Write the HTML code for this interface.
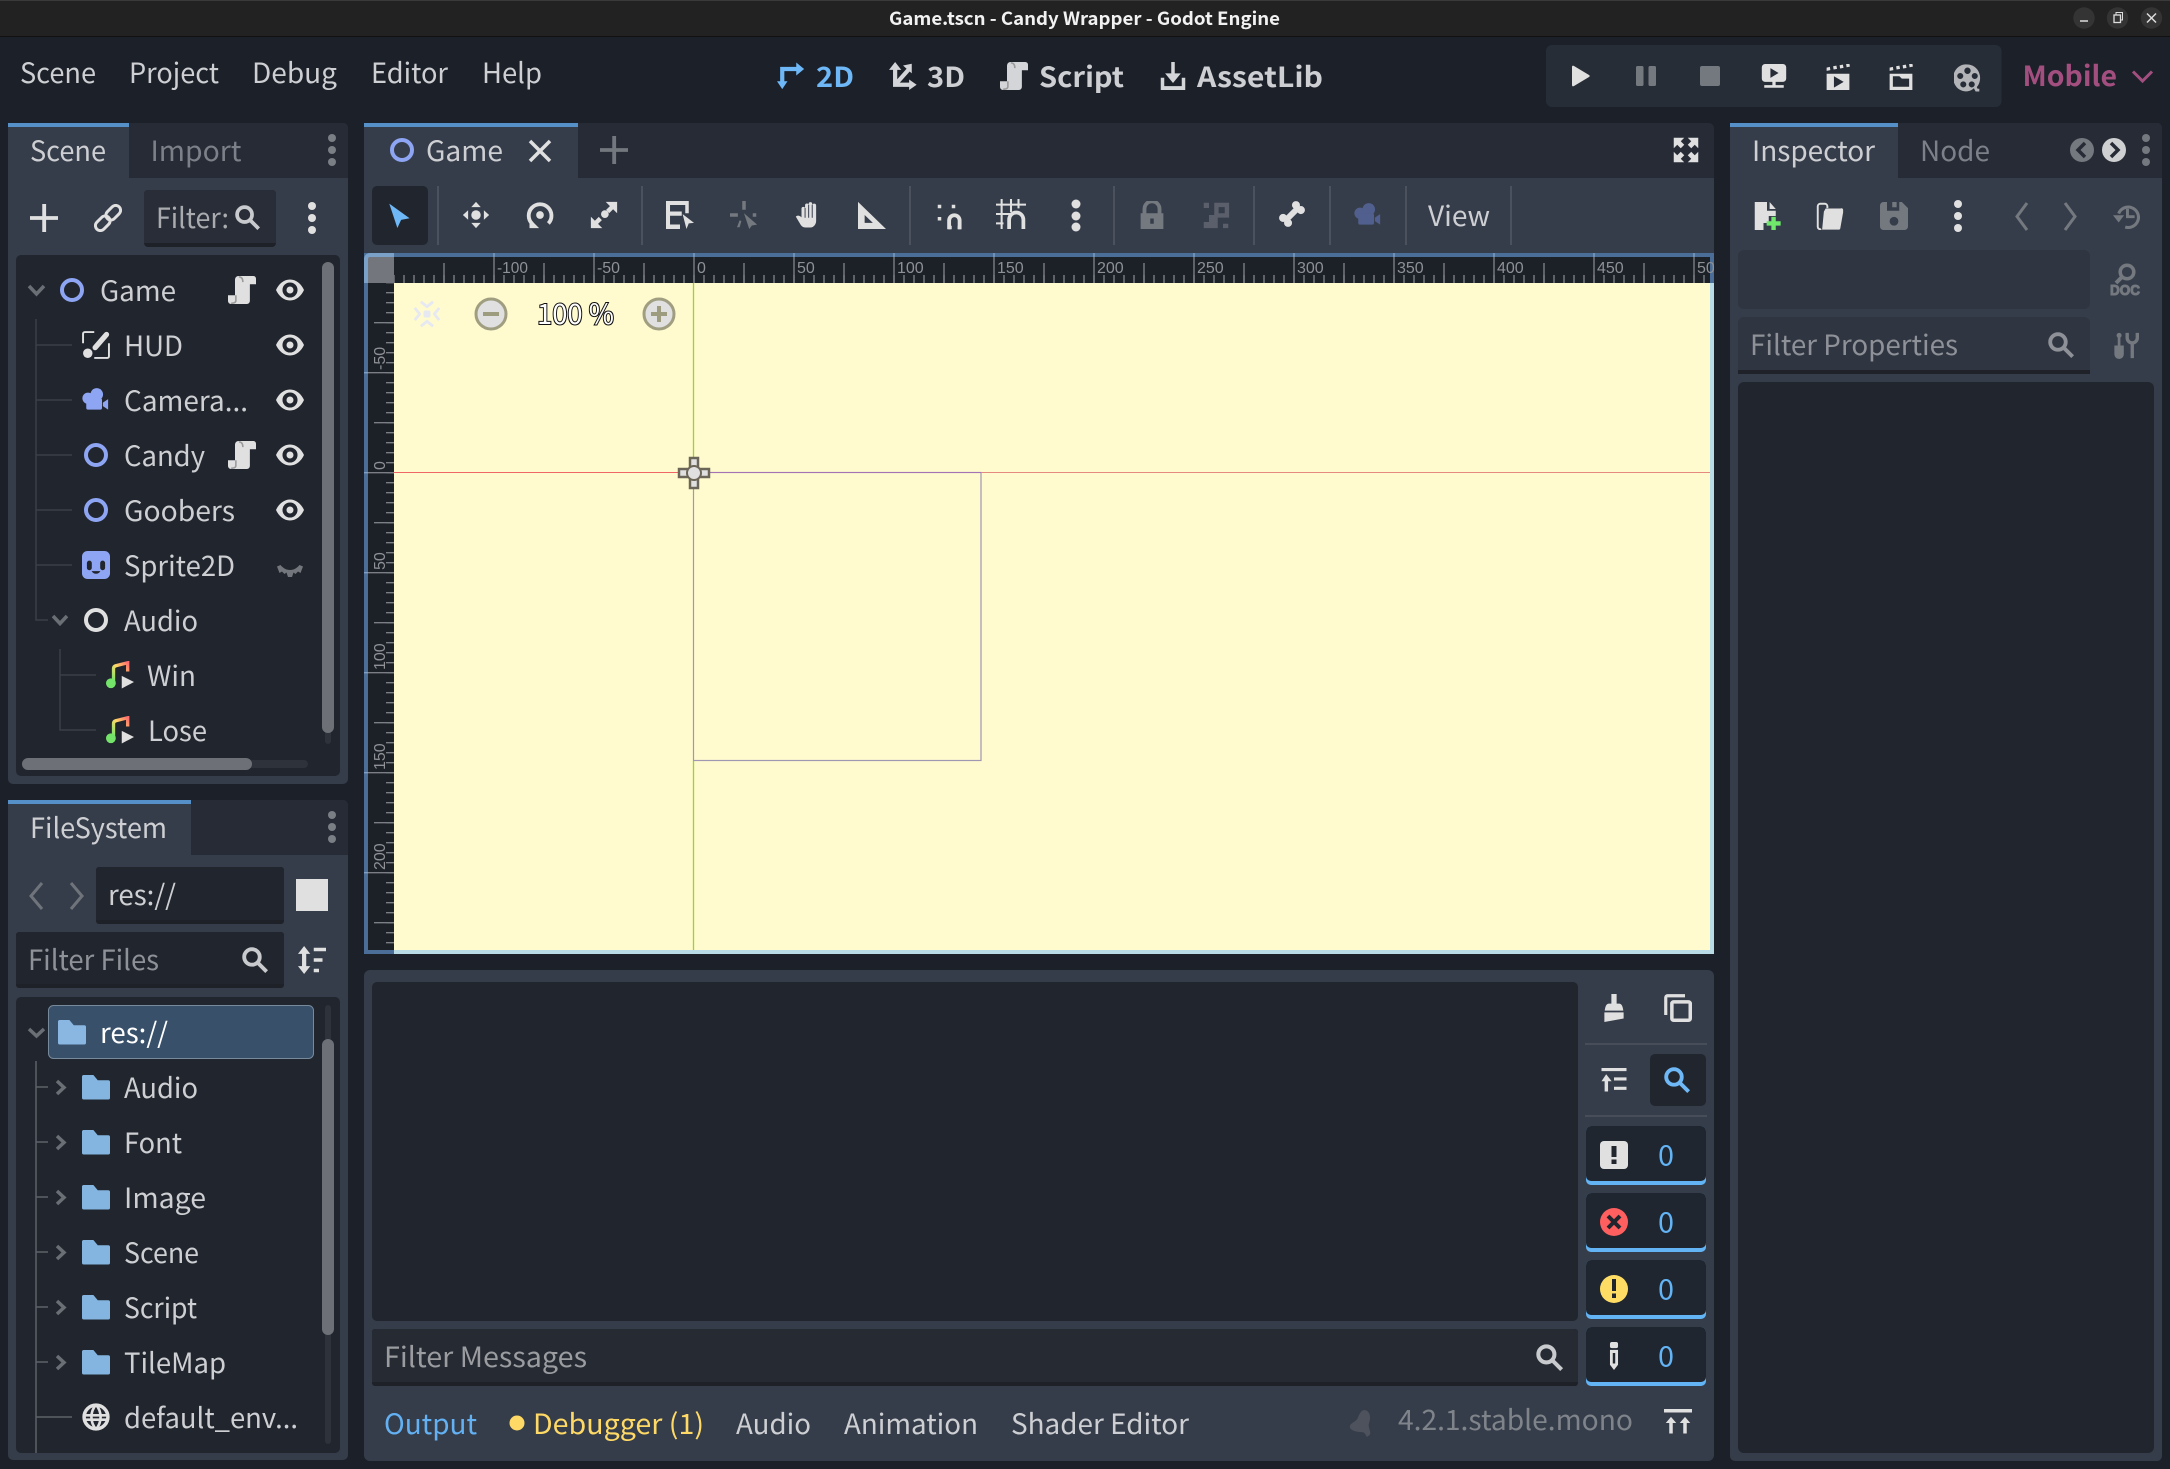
<!DOCTYPE html>
<html><head><meta charset="utf-8"><title>Game.tscn - Candy Wrapper - Godot Engine</title>
<style>
html,body{margin:0;padding:0;background:#1c2028;width:2170px;height:1469px;overflow:hidden}
svg{display:block}
text{font-family:"Noto Sans CJK JP","Liberation Sans",sans-serif;font-size:28px;fill:#cdcfd3}
.dim{fill:#7c8088}.ph{fill:#8e9197}.b{font-weight:700}.r{font-size:16px;fill:#8e9196;font-family:"Liberation Sans",sans-serif}
</style></head><body>
<svg xmlns="http://www.w3.org/2000/svg" width="2170" height="1469" viewBox="0 0 2170 1469" color="#e0e0e0">
<defs>
<linearGradient id="mg" x1="1" y1="0" x2="0" y2="1"><stop offset="0" stop-color="#ff6f6f"/><stop offset=".5" stop-color="#ffd966"/><stop offset="1" stop-color="#74e36a"/></linearGradient>
<clipPath id="rc"><rect x="394" y="253" width="1320" height="30"/></clipPath>
<symbol id="script" viewBox="0 0 16 16"><path fill="currentColor" d="M6 0h8.500A1.500 1.500 0 0 1 16 1.500V4.700h-3.500V14.300A1.700 1.700 0 0 1 10.800 16H1.700A1.700 1.700 0 0 1 0 14.300V11h4V2a2 2 0 0 1 2-2z"/><path fill="none" stroke="#9a9a9a" stroke-width=".9" d="M6.200.5c1.800 0 2.300 1.400 2.300 3M4.500 11v3c0 1.200-1.200 1.700-2.700 1.500"/></symbol>
<symbol id="eye" viewBox="0 0 16 16"><path fill="currentColor" fill-rule="evenodd" d="M8 2C4.500 2 1.500 4.600 0 8c1.500 3.400 4.500 6 8 6s6.500-2.600 8-6c-1.500-3.400-4.500-6-8-6zm0 1.700a4.300 4.300 0 1 1 0 8.600 4.300 4.300 0 0 1 0-8.600zM8 6a2 2 0 1 0 0 4 2 2 0 0 0 0-4z"/></symbol>
<symbol id="hud" viewBox="0 0 16 16"><path fill="none" stroke="currentColor" stroke-width="1.100" d="M7 .6H1.600a1 1 0 0 0-1 1V7M15.400 7v7.400a1 1 0 0 1-1 1H7"/><path fill="none" stroke="currentColor" stroke-width="3" stroke-linecap="round" d="M14 2L7.500 9.500"/><circle cx="3.300" cy="12.700" r="2.700" fill="currentColor"/></symbol>
<symbol id="cam" viewBox="0 0 16 16"><circle cx="4" cy="7" r="3.200" fill="currentColor"/><circle cx="9" cy="4.800" r="3.600" fill="currentColor"/><rect x="3" y="7" width="9" height="6.500" rx="1" fill="currentColor"/><path fill="currentColor" d="M12.500 9.500L15.500 7.500V13.500L12.500 11.500z"/></symbol>
<symbol id="sprite" viewBox="0 0 16 16"><rect x="0" y="0" width="16" height="16" rx="3.200" fill="#8da5f3"/><rect x="2.800" y="5.500" width="2.800" height="5.500" rx="1.400" fill="#21252d"/><rect x="10.400" y="5.500" width="2.800" height="5.500" rx="1.400" fill="#21252d"/><path d="M5.500 11.500c1 2 4 2 5 0z" fill="#21252d"/></symbol>
<symbol id="music" viewBox="0 0 16 16"><path fill="none" stroke="url(#mg)" stroke-width="1.900" d="M4.300 12V4.300q0-1.200 1.300-1.600L12.400 1v5"/><circle cx="2.800" cy="12.700" r="2.800" fill="#74e36a"/><path fill="#e0e0e0" d="M9 8.500l7 3.500-7 3.700z"/></symbol>
<symbol id="folder" viewBox="0 0 16 14"><path fill="currentColor" d="M1 0h5.500l2.500 3h6a1 1 0 0 1 1 1v9a1 1 0 0 1-1 1H1a1 1 0 0 1-1-1V1a1 1 0 0 1 1-1z"/></symbol>
<symbol id="search" viewBox="0 0 16 16"><circle cx="6.500" cy="6.500" r="4.600" fill="none" stroke="currentColor" stroke-width="2.300"/><path stroke="currentColor" stroke-width="2.300" d="M10 10l5.200 5.200"/></symbol>
<symbol id="globe" viewBox="0 0 16 16"><circle cx="8" cy="8" r="6.800" fill="none" stroke="currentColor" stroke-width="2"/><path fill="none" stroke="currentColor" stroke-width="1.500" d="M1 7h14M1 9.500h14M8 1c-3.500 4-3.500 10 0 14M8 1c3.500 4 3.500 10 0 14"/></symbol>
<symbol id="add" viewBox="0 0 16 16"><path fill="currentColor" d="M7 0h2.200v6.900H16v2.200H9.200V16H7V9.100H0V6.900h7z"/></symbol>
<symbol id="link" viewBox="0 0 16 16"><g transform="rotate(45 8 8)" fill="none" stroke="currentColor" stroke-width="1.700"><rect x="5.200" y="-1" width="5.600" height="9.500" rx="2.800"/><rect x="5.200" y="7.500" width="5.600" height="9.500" rx="2.800"/></g></symbol>
<symbol id="arrow" viewBox="0 0 16 16"><path fill="currentColor" d="M2 1l12.500 9-5.200 1L7 16z"/></symbol>
<symbol id="move" viewBox="0 0 16 16"><path fill="currentColor" d="M8 .5L10.700 3.500H5.300zM8 15.500L5.300 12.500h5.400zM.5 8l3-2.700v5.400zM15.500 8l-3 2.700V5.300z"/><circle cx="8" cy="8" r="2.700" fill="currentColor"/></symbol>
<symbol id="rotate" viewBox="0 0 16 16"><path fill="none" stroke="currentColor" stroke-width="2.200" d="M3.500 13A6.500 6.500 0 1 1 12.800 12.800"/><circle cx="8" cy="8" r="2.200" fill="currentColor"/><path fill="currentColor" d="M2 10l5.500 5.500H2z"/></symbol>
<symbol id="scale" viewBox="0 0 16 16"><path fill="currentColor" d="M9 .5h6.500V7l-2.300-2.300-2.200 2.200-1.800-1.800 2.200-2.200zM7 15.500H.5V9l2.300 2.300 2.200-2.200 1.800 1.800-2.200 2.200z"/><circle cx="8.500" cy="7.500" r="2.200" fill="currentColor"/></symbol>
<symbol id="list" viewBox="0 0 16 16"><path fill="currentColor" d="M0 0h13v7h-2V2.300H2.300V6H9v2.400H2.300v5H8V16H0z"/><path fill="currentColor" d="M9.500 7.500l6.500 5-3 .3-1.300 3.200z"/></symbol>
<symbol id="lsel" viewBox="0 0 16 16"><path fill="currentColor" d="M7 0h2v5H7zM0 7h4.500v2H0zM13 7h2v2h-2zM4 15l1.500-4 1 .5L5.500 15z"/><path fill="currentColor" d="M8 7l7.500 6.500-3 .5-1.500 2z"/></symbol>
<symbol id="hand" viewBox="0 0 16 16"><path fill="currentColor" d="M.5 9.300C1.300 8.300 3 8.500 4 9.800V4.400a1.100 1.100 0 0 1 2.200 0V2.300a1.100 1.100 0 0 1 2.200 0V1.500a1.100 1.100 0 0 1 2.200 0v1a1.200 1.200 0 0 1 2.400 0V12c0 2-1.500 4-3.500 4H6.500c-2 0-2.800-1.200-3.800-3z"/><path stroke="#363d4a" stroke-width=".6" d="M6.200 4v6M8.400 2v8M10.600 2v8"/></symbol>
<symbol id="tri" viewBox="0 0 16 16"><path fill="currentColor" fill-rule="evenodd" d="M0 .5L16 16H0zM3.800 8v4.500H8.500z"/></symbol>
<symbol id="snap" viewBox="0 0 16 16"><path fill="none" stroke="currentColor" stroke-width="2.200" d="M7.500 15V10a3 3 0 0 1 6 0v5"/><path fill="currentColor" d="M1 1h2v2H1zM9 1h2v2H9zM1 8h2v2H1zM7 13h2v2H7zM12.400 13h2v2h-2z"/></symbol>
<symbol id="grid" viewBox="0 0 16 16"><path fill="none" stroke="currentColor" stroke-width="1.100" d="M3 0v16M8 0v7M12 0v5M0 3h16M0 8h8M0 13h4"/><path fill="none" stroke="currentColor" stroke-width="2" d="M7 16v-5a3.800 3.800 0 0 1 7.600 0v5"/></symbol>
<symbol id="lock" viewBox="0 0 16 16"><path fill="none" stroke="currentColor" stroke-width="2.200" d="M3.700 8V4.500a4.300 4.300 0 0 1 8.600 0V8"/><path fill="currentColor" fill-rule="evenodd" d="M1.500 7h13v9h-13zM7 10v3h2v-3z"/></symbol>
<symbol id="group" viewBox="0 0 16 16"><path fill="currentColor" d="M1 1h3v3H1zM12 13h3v2.500h-3zM1 12h3v3.500H1z"/><path fill="currentColor" fill-rule="evenodd" d="M7 1h8.500v8.500H7zM9.500 3.500v3.500h3.500v-3.500z"/><rect x="4" y="8" width="5" height="7.500" fill="currentColor"/></symbol>
<symbol id="bone" viewBox="0 0 16 16"><g transform="rotate(45 8 8)" fill="currentColor"><rect x="6.300" y="3" width="3.400" height="10"/><circle cx="6" cy="2.800" r="2.300"/><circle cx="10" cy="2.800" r="2.300"/><circle cx="6" cy="13.200" r="2.300"/><circle cx="10" cy="13.200" r="2.300"/></g></symbol>
<symbol id="expand" viewBox="0 0 16 16"><path fill="currentColor" d="M1 1h6L5 3l2 2-2 2-2-2-2 2zM15 1H9l2 2-2 2 2 2 2-2 2 2zM1 15h6l-2-2 2-2-2-2-2 2-2-2zM15 15H9l2-2-2-2 2-2 2 2 2-2z"/></symbol>
<symbol id="i2d" viewBox="0 0 16 16"><path fill="none" stroke="currentColor" stroke-width="2.400" d="M3 13V4h9"/><path fill="currentColor" d="M11 .3L15.500 4 11 7.700zM0 11h6l-3 4.500z"/></symbol>
<symbol id="i3d" viewBox="0 0 16 16"><path fill="none" stroke="currentColor" stroke-width="2.400" d="M3.500 3v10h9M3.500 13l8-9"/><path fill="currentColor" d="M3.500 0L7 4.500H0zM15.800 13l-4.300 3v-6zM13 1v5.500L8 2z"/></symbol>
<symbol id="asset" viewBox="0 0 16 16"><path fill="currentColor" d="M1 9h2v4.800h10V9h2v7H1z"/><path fill="currentColor" d="M7 0h2v6.500h3.500L8 12 3.500 6.500H7z"/></symbol>
<symbol id="remote" viewBox="0 0 16 16"><path fill="currentColor" fill-rule="evenodd" d="M2.500 0h11A2 2 0 0 1 15.500 2v7a2 2 0 0 1-2 2H9v2h5v1.600H2V13h5v-2H2.500a2 2 0 0 1-2-2V2a2 2 0 0 1 2-2zM5.800 2.500v6l5-3z"/></symbol>
<symbol id="movie" viewBox="0 0 16 16"><path fill="currentColor" fill-rule="evenodd" d="M1 6h14v10H1zM5.500 7.500v7l6-3.500z"/><path fill="currentColor" d="M1 2.200l2-.4.300 2L1 4.200zM5 1.400l2-.4.400 2-2.100.4zM9 .8l2-.4.400 2-2.100.4zM13 0l2-.4.300 2-2 .4z"/></symbol>
<symbol id="moviefold" viewBox="0 0 16 16"><path fill="currentColor" fill-rule="evenodd" d="M1 6h14v10H1zM3 9v5h10V9H8.500L7 7.500H3z"/><path fill="currentColor" d="M1 2.200l2-.4.300 2L1 4.200zM5 1.400l2-.4.400 2-2.100.4zM9 .8l2-.4.400 2-2.100.4zM13 0l2-.4.300 2-2 .4z"/></symbol>
<symbol id="reel" viewBox="0 0 16 16"><path fill="currentColor" fill-rule="evenodd" d="M8 0a7.500 8 0 0 1 5.500 13.400l.5 1h1v1.600h-2.200l-1-1.900A7.500 8 0 1 1 8 0zM8 1.800a1.900 1.900 0 1 0 0 3.800 1.900 1.900 0 0 0 0-3.800zM3.700 5a1.800 1.800 0 1 0 0 3.600 1.800 1.800 0 0 0 0-3.600zM12.300 5a1.800 1.800 0 1 0 0 3.600 1.800 1.800 0 0 0 0-3.600zM5.500 10a1.800 1.800 0 1 0 0 3.600 1.800 1.800 0 0 0 0-3.600zM10.500 10a1.800 1.800 0 1 0 0 3.600 1.800 1.800 0 0 0 0-3.600z"/></symbol>
<symbol id="newfile" viewBox="0 0 16 16"><path fill="currentColor" d="M1 0h7v5h5v3H9v4H6v4H1zM9.500 0L13 4H9.500z"/><path fill="#70e86c" d="M10.500 8.500h2.500V11h2.800v2.500H13V16h-2.500v-2.500H7.800V11h2.700z"/></symbol>
<symbol id="open" viewBox="0 0 16 16"><path fill="none" stroke="currentColor" stroke-width="1.100" d="M3 15.500A1.500 1.500 0 0 1 1 14V2.500A1.500 1.500 0 0 1 2.500 1h2.500a1.500 1.500 0 0 1 1.500 1.500V3.500"/><path fill="currentColor" d="M4.500 5.500l1-1.800H14a1 1 0 0 1 1.500.7v1.500l-1.600 9a1 1 0 0 1-1 .9H3.500z"/></symbol>
<symbol id="save" viewBox="0 0 16 16"><path fill="currentColor" fill-rule="evenodd" d="M2 0h2v5h7V0h1.500L16 3.500V14a2 2 0 0 1-2 2H2a2 2 0 0 1-2-2V2a2 2 0 0 1 2-2zM8 8.500a2.500 2.500 0 1 0 0 5 2.500 2.500 0 0 0 0-5zM7 0h2.500v3H7z"/></symbol>
<symbol id="hist" viewBox="0 0 16 16"><path fill="none" stroke="currentColor" stroke-width="1.900" d="M3.500 6.500A6.300 6.300 0 1 1 7.500 14.800"/><path fill="currentColor" d="M0 7.500h6.800L3.500 12zM8 3.500h1.800v4h3.500v1.800H8z"/></symbol>
<symbol id="tools" viewBox="0 0 16 16"><circle cx="4.200" cy="2" r="1.500" fill="currentColor"/><path fill="currentColor" d="M3.400 2h1.600v6H3.400zM1.400 8h5.600v5.200a2.800 2.800 0 0 1-5.600 0z"/><path fill="none" stroke="currentColor" stroke-width="2" d="M12 6v9.500M9 .5v3a3 3 0 0 0 6 0v-3"/></symbol>
<symbol id="clear" viewBox="0 0 16 16"><rect x="6.500" y="0" width="3" height="7" fill="currentColor"/><path fill="currentColor" d="M5 5.500h6c1 0 2 1 2.300 4H2.700C3 6.500 4 5.500 5 5.500z"/><path fill="currentColor" d="M2.500 10.500h11V14l-11 2z"/></symbol>
<symbol id="copy" viewBox="0 0 16 16"><path fill="none" stroke="currentColor" stroke-width="1.800" d="M1 12V2a1 1 0 0 1 1-1h10"/><rect x="4.500" y="4.500" width="10.500" height="10.500" rx="1" fill="none" stroke="currentColor" stroke-width="2"/></symbol>
<symbol id="collapse" viewBox="0 0 16 16"><path fill="currentColor" d="M0 0h16v2H0zM8 6h8v2H8zM8 12h8v2H8zM3 4l3.500 4.500H4.200V15H2V8.500H0z"/></symbol>
<symbol id="note" viewBox="0 0 16 16"><rect x="5.700" y="0" width="4.600" height="3.500" rx="1.100" fill="currentColor"/><path fill="currentColor" fill-rule="evenodd" d="M5.700 4.500h4.600V13L8 16 5.700 13zM7.300 6.300v6h1.400v-6z"/></symbol>
<symbol id="up2" viewBox="0 0 16 14"><path fill="currentColor" d="M0 0h16v2H0zM4 4.500L7 8H5v6H3V8H1zM12 4.500L15 8h-2v6h-2V8H9z"/></symbol>
<symbol id="sort" viewBox="0 0 16 16"><path fill="currentColor" d="M3.500 0L7 4.500H4.700v7H7L3.500 16 0 11.500h2.300v-7H0zM9 1h7v2H9zM9 7h5v2H9zM9 13h3v2H9z"/></symbol>
<symbol id="center" viewBox="0 0 16 16"><rect x="6" y="6" width="4" height="4" rx="1" fill="currentColor"/><path fill="none" stroke="currentColor" stroke-width="1.600" d="M4.500 1L8 3.800 11.500 1M4.500 15L8 12.200 11.500 15M1 4.500L3.800 8 1 11.500M15 4.500L12.200 8 15 11.500"/></symbol>
<symbol id="fgodot" viewBox="0 0 16 16"><path fill="currentColor" d="M9 0c2 0 3.500 1.800 3.500 4.500 0 2-.8 3-.8 4.500 0 2 1.300 3.500.8 5.500l-1.800 1.500c-1-1.200-1.200-2.500-2.700-2.800C4 13 0 12 .5 9.500 1 7.500 4 7 5 5c1-2 2-5 4-5z"/></symbol>
</defs>

<!-- title bar -->
<rect width="2170" height="1469" fill="#1c2028"/>
<rect width="2170" height="36" fill="#222222"/><rect width="2170" height="1" fill="#3a3a3a"/><rect y="36" width="2170" height="1" fill="#111"/>
<text x="889" y="25" textLength="391" lengthAdjust="spacingAndGlyphs" style="font-size:18px;font-weight:700;fill:#f2f2f2">Game.tscn - Candy Wrapper - Godot Engine</text>
<g fill="#343434"><circle cx="2084" cy="18" r="10.700"/><circle cx="2117.500" cy="18" r="10.700"/><circle cx="2151.500" cy="18" r="10.700"/></g>
<path d="M2080 21h8" stroke="#ddd" stroke-width="1.500"/><rect x="2114" y="15" width="6.500" height="7.500" fill="none" stroke="#ddd" stroke-width="1.300"/><path d="M2116 15v-2.500h6.500V20h-2" fill="none" stroke="#ddd" stroke-width="1"/><path d="M2147 13.500l9 9M2156 13.500l-9 9" stroke="#ddd" stroke-width="1.500"/>

<!-- menu -->
<text x="20" y="83" textLength="76" lengthAdjust="spacingAndGlyphs">Scene</text>
<text x="129" y="83" textLength="90" lengthAdjust="spacingAndGlyphs">Project</text>
<text x="252" y="83" textLength="85" lengthAdjust="spacingAndGlyphs">Debug</text>
<text x="371" y="83" textLength="77" lengthAdjust="spacingAndGlyphs">Editor</text>
<text x="482" y="83" textLength="60" lengthAdjust="spacingAndGlyphs">Help</text>

<use href="#i2d" x="777" y="62" width="28" height="28" color="#6eb8f7"/>
<text x="816" y="87" textLength="38" lengthAdjust="spacingAndGlyphs" class="b" style="fill:#6eb8f7">2D</text>
<use href="#i3d" x="889" y="62" width="28" height="28" color="#d4d5d8"/>
<text x="927" y="87" textLength="38" lengthAdjust="spacingAndGlyphs" class="b">3D</text>
<use href="#script" x="1000" y="62" width="28" height="28" color="#d4d5d8"/>
<text x="1039" y="87" textLength="85" lengthAdjust="spacingAndGlyphs" class="b">Script</text>
<use href="#asset" x="1159" y="62" width="28" height="28" color="#d4d5d8"/>
<text x="1197" y="87" textLength="126" lengthAdjust="spacingAndGlyphs" class="b">AssetLib</text>

<!-- play group -->
<rect x="1546" y="45" width="455.500" height="62" rx="6" fill="#272d37"/>
<path d="M1572 67q0-2 2-1l15 9q1.500 1 0 2l-15 9q-2 1-2-1z" fill="#e0e0e0"/>
<g fill="#74787f"><rect x="1636" y="66" width="7.500" height="20" rx="1.500"/><rect x="1648.500" y="66" width="7.500" height="20" rx="1.500"/><rect x="1700" y="66" width="20" height="20" rx="2"/></g>
<use href="#remote" x="1760" y="64" width="28" height="26"/>
<use href="#movie" x="1824" y="64" width="28" height="26"/>
<use href="#moviefold" x="1887" y="64" width="28" height="26"/>
<use href="#reel" x="1954" y="64" width="27" height="28" color="#b2b4b8"/>
<text x="2022.500" y="86" textLength="94.500" lengthAdjust="spacingAndGlyphs" class="b" style="fill:#a24f80">Mobile</text>
<path d="M2133 71.500l9.500 9.500 9.500-9.500" fill="none" stroke="#a24f80" stroke-width="3"/>

<!-- LEFT: Scene dock -->
<path d="M8 123H343a5 5 0 0 1 5 5V779a5 5 0 0 1-5 5H13a5 5 0 0 1-5-5z" fill="#363d4a"/>
<path d="M129 123H343a5 5 0 0 1 5 5V178H129z" fill="#262b35"/>
<rect x="8" y="123" width="121" height="4" fill="#5690c8"/>
<text x="30" y="161" textLength="76" lengthAdjust="spacingAndGlyphs">Scene</text>
<text x="150.500" y="161" textLength="91" lengthAdjust="spacingAndGlyphs" class="dim">Import</text>
<g fill="#7a7e85"><circle cx="332" cy="138" r="4"/><circle cx="332" cy="150" r="4"/><circle cx="332" cy="162" r="4"/></g>
<use href="#add" x="30" y="204" width="28" height="28"/>
<use href="#link" x="94" y="204" width="28" height="28"/>
<rect x="144" y="190" width="132" height="57" rx="4" fill="#1e2128"/><path d="M144 243V194a4 4 0 0 1 4-4H272a4 4 0 0 1 4 4V243z" fill="#282d37"/>
<text x="156" y="228" textLength="73" lengthAdjust="spacingAndGlyphs" style="fill:#a9abaf">Filter:</text>
<use href="#search" x="234" y="204" width="26" height="26" color="#c8cacd"/>
<g fill="#e0e0e0"><circle cx="312" cy="206" r="4"/><circle cx="312" cy="218" r="4"/><circle cx="312" cy="230" r="4"/></g>
<rect x="16" y="255" width="324" height="521" rx="5" fill="#21252d"/>
<rect x="325" y="262" width="6" height="482" rx="3" fill="#2d323b"/><rect x="322" y="262" width="12" height="471" rx="6" fill="#6d7177"/>
<rect x="22" y="760" width="286" height="8" rx="4" fill="#2d323b"/><rect x="22" y="758" width="230" height="12" rx="6" fill="#6d7177"/>
<!-- scene tree lines -->
<g stroke="#3a3f48" stroke-width="1.500" fill="none"><path d="M36 319V620H48M36 345H72M36 400H72M36 455H72M36 510H72M36 565H72M60 649V730H96M60 675H96"/></g>
<path d="M29 286l7.500 8 7.500-8" fill="none" stroke="#6a6e75" stroke-width="3.500"/>
<circle cx="72" cy="290" r="10" fill="none" stroke="#8da5f3" stroke-width="4"/>
<text x="100" y="301" textLength="76" lengthAdjust="spacingAndGlyphs">Game</text>
<use href="#script" x="228" y="276" width="28" height="28"/>
<use href="#eye" x="276" y="276" width="28" height="28"/>
<use href="#hud" x="82" y="331" width="28" height="28"/>
<text x="124" y="356" textLength="59" lengthAdjust="spacingAndGlyphs">HUD</text>
<use href="#eye" x="276" y="331" width="28" height="28"/>
<use href="#cam" x="81" y="386" width="28" height="28" color="#8da5f3"/>
<text x="124" y="411" textLength="124" lengthAdjust="spacingAndGlyphs">Camera...</text>
<use href="#eye" x="276" y="386" width="28" height="28"/>
<circle cx="96" cy="455" r="10" fill="none" stroke="#8da5f3" stroke-width="4"/>
<text x="124" y="466" textLength="81" lengthAdjust="spacingAndGlyphs">Candy</text>
<use href="#script" x="228" y="441" width="28" height="28"/>
<use href="#eye" x="276" y="441" width="28" height="28"/>
<circle cx="96" cy="510" r="10" fill="none" stroke="#8da5f3" stroke-width="4"/>
<text x="124" y="521" textLength="111" lengthAdjust="spacingAndGlyphs">Goobers</text>
<use href="#eye" x="276" y="496" width="28" height="28"/>
<use href="#sprite" x="82" y="551" width="28" height="28"/>
<text x="124" y="576" textLength="111" lengthAdjust="spacingAndGlyphs">Sprite2D</text>
<path d="M277 566.500l3.500-1.500c2.500 3 5.500 5 9.500 5s7-2 9.500-5l3.500 1.500-2.500 6.500-2.500-1.500-2.500 2.500-2-1.500-1.500 4.500h-4l-1.500-4.500-2 1.500-2.500-2.500-2.500 1.500z" fill="#73777d"/>
<path d="M53 616l7 7.500 7-7.500" fill="none" stroke="#6a6e75" stroke-width="3.500"/>
<circle cx="96" cy="620" r="10" fill="none" stroke="#e0e0e0" stroke-width="4"/>
<text x="124" y="631" textLength="74" lengthAdjust="spacingAndGlyphs">Audio</text>
<use href="#music" x="106" y="661" width="28" height="28"/>
<text x="147" y="686" textLength="49" lengthAdjust="spacingAndGlyphs">Win</text>
<use href="#music" x="106" y="716" width="28" height="28"/>
<text x="148" y="741" textLength="59" lengthAdjust="spacingAndGlyphs">Lose</text>

<!-- LEFT: FileSystem dock -->
<path d="M8 800H343a5 5 0 0 1 5 5V1455a5 5 0 0 1-5 5H13a5 5 0 0 1-5-5z" fill="#363d4a"/>
<path d="M191 800H343a5 5 0 0 1 5 5V855H191z" fill="#262b35"/>
<rect x="8" y="800" width="183" height="4" fill="#5690c8"/>
<text x="30" y="838" textLength="137" lengthAdjust="spacingAndGlyphs">FileSystem</text>
<g fill="#7a7e85"><circle cx="332" cy="815" r="4"/><circle cx="332" cy="827" r="4"/><circle cx="332" cy="839" r="4"/></g>
<path d="M42 883l-11 13 11 13M71 883l11 13-11 13" fill="none" stroke="#6f737a" stroke-width="3"/>
<rect x="96" y="867" width="188" height="57" rx="3" fill="#1e2128"/><path d="M96 920V871a4 4 0 0 1 4-4H280a4 4 0 0 1 4 4V920z" fill="#21252d"/>
<text x="108" y="905" textLength="68" lengthAdjust="spacingAndGlyphs">res://</text>
<rect x="296" y="879" width="32" height="32" fill="#e0e0e0"/>
<rect x="16" y="932" width="268" height="56" rx="3" fill="#1e2128"/><path d="M16 984V936a4 4 0 0 1 4-4H280a4 4 0 0 1 4 4V984z" fill="#21252d"/>
<text x="28" y="970" textLength="131" lengthAdjust="spacingAndGlyphs" class="ph">Filter Files</text>
<use href="#search" x="241" y="946" width="27" height="27" color="#c8cacd"/>
<use href="#sort" x="298" y="946" width="28" height="28"/>
<rect x="16" y="997" width="324" height="456" rx="5" fill="#21252d"/>
<rect x="325" y="1005" width="6" height="439" rx="3" fill="#2d323b"/><rect x="322" y="1039" width="12" height="296" rx="6" fill="#6d7177"/>
<g stroke="#5d6168" stroke-width="1.500" fill="none"><path d="M36 1061V1453M36 1087H48M36 1142H48M36 1197H48M36 1252H48M36 1307H48M36 1362H48M36 1417H72"/></g>
<rect x="48.500" y="1005.500" width="265" height="53" rx="5" fill="#38506a" stroke="#778a9c"/>
<path d="M29 1029l7.500 7 7.500-7" fill="none" stroke="#6a6e75" stroke-width="3.500"/>
<use href="#folder" x="58" y="1020" width="28" height="24.500" color="#8ab7e2"/>
<text x="100" y="1043" textLength="68" lengthAdjust="spacingAndGlyphs" style="fill:#fff">res://</text>
<g fill="none" stroke="#6a6e75" stroke-width="3.500"><path d="M57 1081l7 6.500-7 6.500M57 1136l7 6.500-7 6.500M57 1191l7 6.500-7 6.500M57 1246l7 6.500-7 6.500M57 1301l7 6.500-7 6.500M57 1356l7 6.500-7 6.500"/></g>
<g color="#84b5e0"><use href="#folder" x="82" y="1075" width="28" height="24.500"/><use href="#folder" x="82" y="1130" width="28" height="24.500"/><use href="#folder" x="82" y="1185" width="28" height="24.500"/><use href="#folder" x="82" y="1240" width="28" height="24.500"/><use href="#folder" x="82" y="1295" width="28" height="24.500"/><use href="#folder" x="82" y="1350" width="28" height="24.500"/></g>
<use href="#globe" x="82" y="1403" width="28" height="28"/>
<text x="124" y="1098" textLength="74" lengthAdjust="spacingAndGlyphs">Audio</text>
<text x="124" y="1153" textLength="58" lengthAdjust="spacingAndGlyphs">Font</text>
<text x="124" y="1208" textLength="82" lengthAdjust="spacingAndGlyphs">Image</text>
<text x="124" y="1263" textLength="75" lengthAdjust="spacingAndGlyphs">Scene</text>
<text x="124" y="1318" textLength="73" lengthAdjust="spacingAndGlyphs">Script</text>
<text x="124" y="1373" textLength="102" lengthAdjust="spacingAndGlyphs">TileMap</text>
<text x="124" y="1428" textLength="174" lengthAdjust="spacingAndGlyphs">default_env...</text>

<!-- CENTER top -->
<path d="M364 123H1709a5 5 0 0 1 5 5V178H364z" fill="#262b35"/>
<rect x="364" y="123" width="214" height="55" fill="#363d4a"/><rect x="364" y="123" width="214" height="4" fill="#5690c8"/>
<circle cx="402" cy="150" r="10" fill="none" stroke="#8da5f3" stroke-width="4"/>
<text x="426" y="161" textLength="77" lengthAdjust="spacingAndGlyphs">Game</text>
<path d="M530 141l20 20M550 141l-20 20" stroke="#e0e0e0" stroke-width="3.500"/>
<use href="#add" x="600" y="136" width="28" height="28" color="#73777e"/>
<use href="#expand" x="1672" y="136" width="28" height="28"/>
<rect x="364" y="178" width="1350" height="75" fill="#363d4a"/>
<rect x="372" y="186" width="56" height="59" rx="5" fill="#21262e"/>
<use href="#arrow" x="386" y="202" width="26" height="26" color="#6eb8f7"/>
<g fill="#4b515d"><rect x="437" y="186" width="2" height="59"/><rect x="641" y="186" width="2" height="59"/><rect x="909" y="186" width="2" height="59"/><rect x="1113" y="186" width="2" height="59"/><rect x="1253" y="186" width="2" height="59"/><rect x="1329" y="186" width="2" height="59"/><rect x="1405" y="186" width="2" height="59"/><rect x="1510" y="186" width="2" height="59"/></g>
<use href="#move" x="462" y="201" width="28" height="28"/>
<use href="#rotate" x="526" y="201" width="28" height="28"/>
<use href="#scale" x="590" y="201" width="28" height="28"/>
<use href="#list" x="666" y="201" width="28" height="28"/>
<use href="#lsel" x="730" y="201" width="28" height="28" color="#74787f"/>
<use href="#hand" x="795" y="200" width="26" height="29"/>
<use href="#tri" x="858" y="201" width="28" height="28"/>
<use href="#snap" x="936" y="203" width="28" height="28"/>
<use href="#grid" x="996" y="199" width="30" height="30"/>
<g fill="#e0e0e0"><circle cx="1076" cy="204" r="4.500"/><circle cx="1076" cy="216" r="4.500"/><circle cx="1076" cy="227" r="4.500"/></g>
<use href="#lock" x="1138" y="201" width="28" height="28" color="#74787f"/>
<use href="#group" x="1202" y="201" width="28" height="28" color="#5a5f6b"/>
<use href="#bone" x="1278" y="200" width="28" height="28"/>
<use href="#cam" x="1353" y="201" width="28" height="28" color="#505f8d"/>
<text x="1428" y="226" textLength="62" lengthAdjust="spacingAndGlyphs">View</text>

<!-- viewport -->
<rect x="364" y="253" width="1350" height="701" fill="#1c2027"/>
<rect x="394" y="283" width="1316" height="667" fill="#fffbcf"/>
<!-- borders -->
<rect x="364" y="253" width="1350" height="4" fill="#4a6e98"/>
<rect x="364" y="253" width="4" height="701" fill="#4a6e98"/>
<rect x="368" y="950" width="26" height="4" fill="#4a6e98"/>
<rect x="1710" y="253" width="4" height="30" fill="#4a6e98"/>
<rect x="394" y="950" width="1320" height="4" fill="#b9dbe6"/>
<rect x="1710" y="283" width="4" height="671" fill="#b9dbe6"/>
<!-- h ruler -->
<g fill="none" stroke="#7b7f85">
<line x1="393.300" y1="279" x2="1710" y2="279" stroke-width="8" stroke-dasharray="1.400 8.600"/>
<line x1="443.300" y1="273" x2="1710" y2="273" stroke-width="20" stroke-dasharray="1.400 98.600"/>
<line x1="493.300" y1="270" x2="1710" y2="270" stroke-width="26" stroke-dasharray="1.400 98.600"/>
</g>
<line x1="493.300" y1="255" x2="1710" y2="255" stroke="#7fa0c4" stroke-width="4" stroke-dasharray="1.400 98.600"/>
<g clip-path="url(#rc)">
<text class="r" x="497" y="273" textLength="31" lengthAdjust="spacingAndGlyphs">-100</text><text class="r" x="597" y="273" textLength="23" lengthAdjust="spacingAndGlyphs">-50</text><text class="r" x="697" y="273">0</text><text class="r" x="797" y="273">50</text><text class="r" x="897" y="273">100</text><text class="r" x="997" y="273">150</text><text class="r" x="1097" y="273">200</text><text class="r" x="1197" y="273">250</text><text class="r" x="1297" y="273">300</text><text class="r" x="1397" y="273">350</text><text class="r" x="1497" y="273">400</text><text class="r" x="1597" y="273">450</text><text class="r" x="1697" y="273">500</text>
</g>
<!-- v ruler -->
<g fill="none" stroke="#7b7f85">
<line x1="390" y1="282" x2="390" y2="950" stroke-width="8" stroke-dasharray="1.400 8.600"/>
<line x1="384" y1="322" x2="384" y2="950" stroke-width="20" stroke-dasharray="1.400 98.600"/>
<line x1="381" y1="372" x2="381" y2="950" stroke-width="26" stroke-dasharray="1.400 98.600"/>
</g>
<line x1="366" y1="372" x2="366" y2="950" stroke="#7fa0c4" stroke-width="4" stroke-dasharray="1.400 98.600"/>
<g>
<text class="r" transform="translate(385 370) rotate(-90)">-50</text><text class="r" transform="translate(385 470) rotate(-90)">0</text><text class="r" transform="translate(385 570) rotate(-90)">50</text><text class="r" transform="translate(385 670) rotate(-90)">100</text><text class="r" transform="translate(385 770) rotate(-90)">150</text><text class="r" transform="translate(385 870) rotate(-90)">200</text>
</g>
<rect x="368" y="257" width="26" height="26" fill="#73777d"/>
<path d="M364 283V259a6 6 0 0 1 6-6h24v4h-24a2 2 0 0 0-2 2v24z" fill="#7ba1c9"/>
<!-- axes -->
<line x1="693.500" y1="283" x2="693.500" y2="473" stroke="#9fd32c" stroke-width="1.300"/>
<line x1="693.500" y1="761" x2="693.500" y2="950" stroke="#9fd32c" stroke-width="1.300"/>
<line x1="394" y1="472.500" x2="694" y2="472.500" stroke="#f06565"/>
<line x1="981" y1="472.500" x2="1710" y2="472.500" stroke="#e58a7f"/>
<rect x="693.500" y="472.500" width="287.500" height="288" fill="none" stroke="#a097b2" stroke-width="1.200"/>
<line x1="694" y1="472.500" x2="981" y2="472.500" stroke="#a572b4"/>
<!-- origin -->
<g fill="#e0e0e0" stroke="#6b6657" stroke-width="2.500">
<rect x="690" y="458" width="8" height="10"/>
<rect x="690" y="478" width="8" height="10"/>
<rect x="679" y="469" width="10" height="8"/>
<rect x="699" y="469" width="10" height="8"/>
</g>
<circle cx="694" cy="473" r="7" fill="#e0e0e0" stroke="#6b6657" stroke-width="2"/>
<!-- zoom widgets -->
<use href="#center" x="413" y="300" width="28" height="28" color="#e6e8f2"/>
<circle cx="491" cy="314" r="15" fill="#e0e0e0" stroke="#a09e80" stroke-width="3"/><rect x="483" y="312" width="16" height="4" fill="#9e9c7e"/>
<circle cx="659" cy="314" r="15" fill="#e0e0e0" stroke="#a09e80" stroke-width="3"/><path d="M651 312h6v-6h4v6h6v4h-6v6h-4v-6h-6z" fill="#9e9c7e"/>
<text x="537" y="324" textLength="77" lengthAdjust="spacingAndGlyphs" style="fill:#fff;stroke:#111;stroke-width:2px;paint-order:stroke">100 %</text>

<!-- bottom panel -->
<rect x="364" y="970" width="1350" height="491" rx="6" fill="#363d4a"/>
<rect x="372" y="982" width="1206" height="339" rx="5" fill="#21252d"/>
<rect x="372" y="1329" width="1206" height="57" rx="3" fill="#1e2127"/><path d="M372 1382V1333a4 4 0 0 1 4-4H1574a4 4 0 0 1 4 4V1382z" fill="#252a33"/>
<text x="384" y="1367" textLength="203" lengthAdjust="spacingAndGlyphs" style="fill:#9a9ca0">Filter Messages</text>
<use href="#search" x="1535" y="1343" width="28" height="28" color="#c8cacd"/>
<use href="#clear" x="1600" y="994" width="28" height="28"/>
<use href="#copy" x="1664" y="994" width="28" height="28"/>
<rect x="1585" y="1043" width="122" height="2" fill="#474d59"/>
<rect x="1585" y="1115" width="122" height="2" fill="#474d59"/>
<use href="#collapse" x="1600" y="1068" width="28" height="25"/>
<rect x="1650" y="1054" width="56" height="52" rx="5" fill="#21262e"/>
<use href="#search" x="1663" y="1066" width="27" height="27" color="#6eb8f7"/>
<g>
<rect x="1586" y="1126" width="120" height="59" rx="5" fill="#63b4f5"/><rect x="1586" y="1126" width="120" height="55" rx="5" fill="#1f2630"/>
<rect x="1586" y="1193" width="120" height="59" rx="5" fill="#63b4f5"/><rect x="1586" y="1193" width="120" height="55" rx="5" fill="#1f2630"/>
<rect x="1586" y="1260" width="120" height="59" rx="5" fill="#63b4f5"/><rect x="1586" y="1260" width="120" height="55" rx="5" fill="#1f2630"/>
<rect x="1586" y="1327" width="120" height="59" rx="5" fill="#63b4f5"/><rect x="1586" y="1327" width="120" height="55" rx="5" fill="#1f2630"/>
</g>
<rect x="1600" y="1141" width="28" height="28" rx="4" fill="#e0e0e0"/><path d="M1611.500 1146h5v11h-5zM1611.500 1159.500h5v4.500h-5z" fill="#21252d"/>
<circle cx="1614" cy="1222" r="14" fill="#ff5f5f"/><path d="M1608 1216l12 12M1620 1216l-12 12" stroke="#21252d" stroke-width="4"/>
<circle cx="1614" cy="1289" r="14" fill="#ffdd65"/><path d="M1612 1279h4v12h-4zM1612 1293.500h4v4.500h-4z" fill="#21252d"/>
<use href="#note" x="1600" y="1342" width="28" height="28"/>
<text x="1658" y="1165.500" textLength="16" lengthAdjust="spacingAndGlyphs" style="fill:#63b4f5">0</text>
<text x="1658" y="1232.500" textLength="16" lengthAdjust="spacingAndGlyphs" style="fill:#63b4f5">0</text>
<text x="1658" y="1299.500" textLength="16" lengthAdjust="spacingAndGlyphs" style="fill:#63b4f5">0</text>
<text x="1658" y="1366.500" textLength="16" lengthAdjust="spacingAndGlyphs" style="fill:#63b4f5">0</text>
<text x="384" y="1434" textLength="93" lengthAdjust="spacingAndGlyphs" style="fill:#63b0f2">Output</text>
<circle cx="517" cy="1423" r="7.500" fill="#ffd966"/>
<text x="533" y="1434" textLength="171" lengthAdjust="spacingAndGlyphs" style="fill:#ffd966">Debugger (1)</text>
<text x="736" y="1434" textLength="75" lengthAdjust="spacingAndGlyphs">Audio</text>
<text x="844" y="1434" textLength="134" lengthAdjust="spacingAndGlyphs">Animation</text>
<text x="1011" y="1434" textLength="178" lengthAdjust="spacingAndGlyphs">Shader Editor</text>
<use href="#fgodot" x="1349" y="1410" width="27" height="27" color="#4d525c"/>
<text x="1398" y="1430" textLength="235" lengthAdjust="spacingAndGlyphs" style="fill:#7f838a">4.2.1.stable.mono</text>
<use href="#up2" x="1664" y="1409" width="28" height="24.500"/>

<!-- RIGHT: inspector -->
<path d="M1730 123H2157a5 5 0 0 1 5 5V1456a5 5 0 0 1-5 5H1735a5 5 0 0 1-5-5z" fill="#363d4a"/>
<path d="M1898 123H2157a5 5 0 0 1 5 5V178H1898z" fill="#262b35"/>
<rect x="1730" y="123" width="168" height="4" fill="#5690c8"/>
<text x="1752" y="161" textLength="123" lengthAdjust="spacingAndGlyphs">Inspector</text>
<text x="1920" y="161" textLength="70" lengthAdjust="spacingAndGlyphs" class="dim">Node</text>
<circle cx="2082" cy="150" r="12" fill="#74787f"/><path d="M2085 143l-7 7 7 7" fill="none" stroke="#262b35" stroke-width="3.500"/>
<circle cx="2114" cy="150" r="12" fill="#cfd0d2"/><path d="M2111 143l7 7-7 7" fill="none" stroke="#262b35" stroke-width="3.500"/>
<g fill="#74787f"><circle cx="2146" cy="138" r="4"/><circle cx="2146" cy="150" r="4"/><circle cx="2146" cy="162" r="4"/></g>
<use href="#newfile" x="1753" y="202" width="28" height="28"/>
<use href="#open" x="1816" y="202" width="28" height="28"/>
<use href="#save" x="1880" y="202" width="28" height="28" color="#74787f"/>
<g fill="#e0e0e0"><circle cx="1958" cy="204" r="4"/><circle cx="1958" cy="216" r="4"/><circle cx="1958" cy="228" r="4"/></g>
<path d="M2027 203l-10 13.500 10 13.500M2065 203l10 13.500-10 13.500" fill="none" stroke="#74787f" stroke-width="3"/>
<use href="#hist" x="2112" y="203" width="28" height="26" color="#74787f"/>
<rect x="1738" y="250" width="352" height="59" rx="6" fill="#2f3541"/>
<circle cx="2127" cy="272" r="6.800" fill="none" stroke="#74787f" stroke-width="3.500"/>
<path d="M2122 277l-6 6" stroke="#74787f" stroke-width="4"/>
<text x="2110" y="295" textLength="30" lengthAdjust="spacingAndGlyphs" style="font-size:15px;font-weight:700;font-family:'Liberation Sans',sans-serif;fill:#74787f;stroke:#74787f;stroke-width:1px">DOC</text>
<path d="M1738 370V323a6 6 0 0 1 6-6H2084a6 6 0 0 1 6 6V370z" fill="#2f3541"/><rect x="1738" y="370" width="352" height="4" fill="#1f2229"/>
<text x="1750" y="355" textLength="208" lengthAdjust="spacingAndGlyphs" class="ph">Filter Properties</text>
<use href="#search" x="2047" y="331" width="27" height="27" color="#8e9197"/>
<use href="#tools" x="2112" y="331" width="27" height="29" color="#74787f"/>
<rect x="1738" y="382" width="416" height="1071" rx="6" fill="#21252d"/>
</svg>
</body></html>
